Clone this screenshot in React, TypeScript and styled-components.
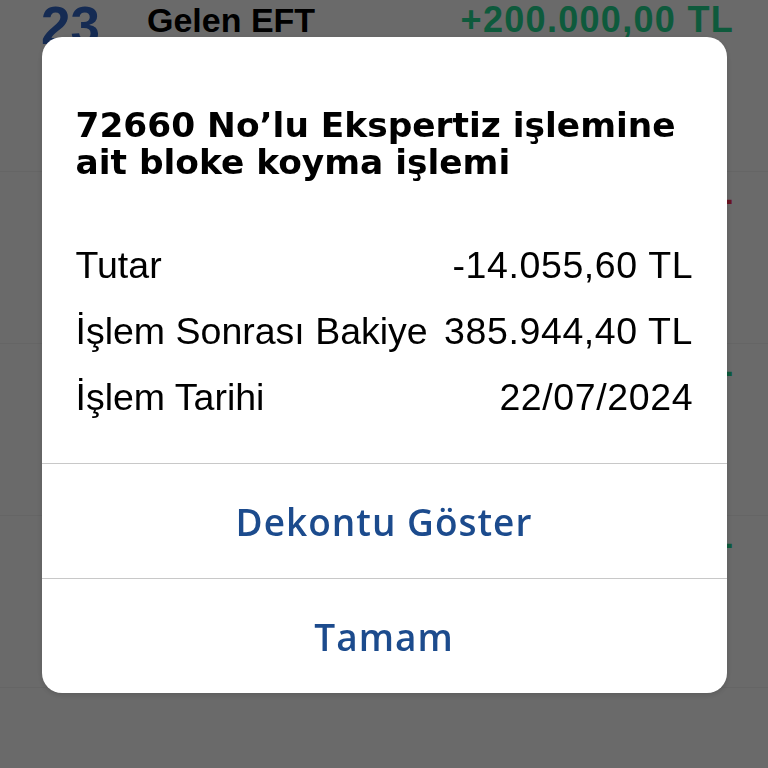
import React from "react";
import styled, { createGlobalStyle } from "styled-components";

const Global = createGlobalStyle`
  html, body { margin: 0; padding: 0; background: #ffffff; }
  body { font-family: "Liberation Sans", Arial, sans-serif; width: 768px; height: 768px; overflow: hidden; }
`;

const List = styled.div`
  display: flex;
  flex-direction: column;
`;

const TxRow = styled.div`
  height: 172px;
  display: grid;
  grid-template-columns: 106px 1fr auto;
  align-items: start;
  padding: 0 35px 0 41px;
  box-sizing: border-box;
  border-bottom: 1px solid #f2f2f2;
`;

const Day = styled.div`
  font-size: 53px;
  line-height: 52px;
  font-weight: 700;
  color: #3468c8;
`;

const TxName = styled.div`
  font-size: 34px;
  line-height: 40px;
  color: #000;
  font-weight: 700;
`;

const TxAmount = styled.div<{ $neg?: boolean }>`
  font-size: 36px;
  line-height: 40px;
  font-weight: 700;
  letter-spacing: 1.3px;
  margin-right: -1px;
  color: ${(p) => (p.$neg ? "#ff3050" : "#22d890")};
`;

const Overlay = styled.div`
  position: fixed;
  inset: 0;
  background: rgba(0, 0, 0, 0.584);
  display: flex;
  justify-content: center;
  align-items: flex-start;
  padding-top: 37px;
`;

const Dialog = styled.div`
  width: 685px;
  background: #ffffff;
  border-radius: 20px;
  overflow: hidden;
  display: flex;
  flex-direction: column;
  box-shadow: 0 2px 6px rgba(0, 0, 0, 0.15);
`;

const Body = styled.div`
  padding: 70px 34px 33px;
  display: flex;
  flex-direction: column;
`;

const Title = styled.div`
  font-family: "DejaVu Sans", sans-serif;
  font-size: 34.4px;
  line-height: 37px;
  font-weight: 700;
  color: #000;
  margin-bottom: 51px;
`;

const InfoRow = styled.div`
  display: flex;
  justify-content: space-between;
  font-size: 37.5px;
  line-height: 66px;
  color: #000;
`;

const Value = styled.span`
  letter-spacing: 0.6px;
  margin-right: -0.6px;
`;

const Divider = styled.div`
  height: 1px;
  background: #c8c8c8;
`;

const Action = styled.button`
  height: 114px;
  border: 0;
  padding: 0;
  background: transparent;
  font-family: "Open Sans", sans-serif;
  font-size: 37px;
  letter-spacing: 1px;
  font-weight: 600;
  color: #1c4b8d;
  cursor: pointer;
`;

const info = [
  ["Tutar", "-14.055,60 TL"],
  ["İşlem Sonrası Bakiye", "385.944,40 TL"],
  ["İşlem Tarihi", "22/07/2024"],
];

export default function App() {
  return (
    <>
      <Global />
      <List>
        <TxRow>
          <Day>23</Day>
          <TxName>Gelen EFT</TxName>
          <TxAmount>+200.000,00 TL</TxAmount>
        </TxRow>
        <TxRow>
          <Day>22</Day>
          <TxName>Bloke</TxName>
          <TxAmount $neg>-14.055,60 TL</TxAmount>
        </TxRow>
        <TxRow>
          <Day>21</Day>
          <TxName>Gelen EFT</TxName>
          <TxAmount>+100.000,00 TL</TxAmount>
        </TxRow>
        <TxRow>
          <Day>20</Day>
          <TxName>Gelen EFT</TxName>
          <TxAmount>+300.000,00 TL</TxAmount>
        </TxRow>
      </List>
      <Overlay>
        <Dialog>
          <Body>
            <Title>72660 No’lu Ekspertiz işlemine ait bloke koyma işlemi</Title>
            {info.map(([k, v]) => (
              <InfoRow key={k}>
                <span>{k}</span>
                <Value>{v}</Value>
              </InfoRow>
            ))}
          </Body>
          <Divider />
          <Action>Dekontu Göster</Action>
          <Divider />
          <Action>Tamam</Action>
        </Dialog>
      </Overlay>
    </>
  );
}
